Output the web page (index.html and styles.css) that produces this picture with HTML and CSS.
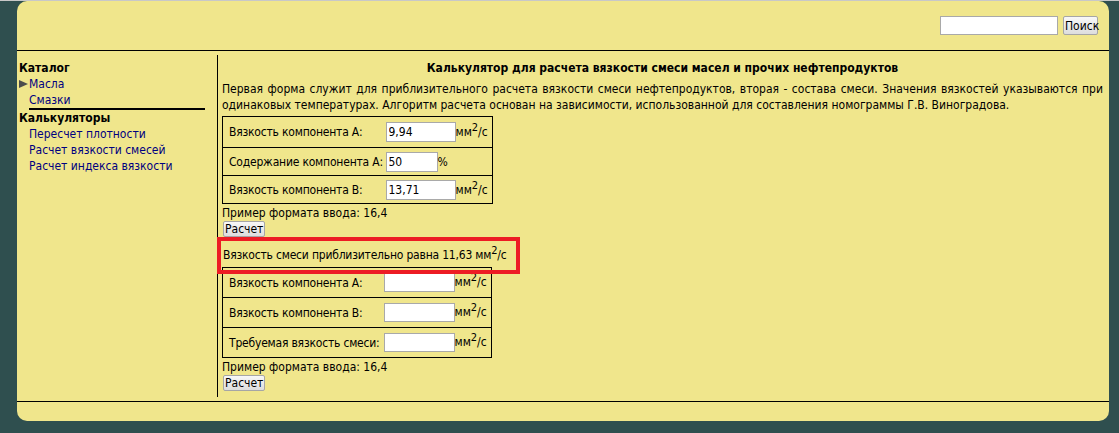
FILE: index.html
```html
<!DOCTYPE html>
<html lang="ru">
  <head>
    <meta charset="UTF-8" />
    <title>Калькулятор вязкости смеси</title>
    <link rel="stylesheet" href="styles.css">
  </head>
  <body>
    <div class="page">
      <header class="header">
        <form class="search">
          <input class="search__input" type="text" />
          <button class="search__button" type="button">Поиск</button>
        </form>
      </header>
      <div class="layout">
        <nav class="sidebar">
          <div class="sidebar__title">Каталог</div>
          <a class="sidebar__link sidebar__link--current" href="#">
            <svg class="sidebar__arrow" width="9" height="8" viewBox="0 0 9 8"><polygon points="0,0 9,4 0,8" fill="#4d4d4d" /></svg>Масла
          </a>
          <a class="sidebar__link sidebar__link--last" href="#">Смазки</a>
          <div class="sidebar__title">Калькуляторы</div>
          <a class="sidebar__link" href="#">Пересчет плотности</a>
          <a class="sidebar__link" href="#">Расчет вязкости смесей</a>
          <a class="sidebar__link" href="#">Расчет индекса вязкости</a>
        </nav>
        <main class="main">
          <h1 class="main__title">Калькулятор для расчета вязкости смеси масел и прочих нефтепродуктов</h1>
          <p class="main__text">Первая форма служит для приблизительного расчета вязкости смеси нефтепродуктов, вторая - состава смеси. Значения вязкостей указываются при одинаковых температурах. Алгоритм расчета основан на зависимости, использованной для составления номограммы Г.В. Виноградова.</p>

          <table class="calc calc--first">
            <tr class="calc__row calc__row--tall">
              <td class="calc__label">Вязкость компонента А:</td>
              <td class="calc__field"><input class="calc__input" type="text" value="9,94" />мм<sup>2</sup>/с</td>
            </tr>
            <tr class="calc__row">
              <td class="calc__label">Содержание компонента А:</td>
              <td class="calc__field"><input class="calc__input calc__input--short" type="text" value="50" />%</td>
            </tr>
            <tr class="calc__row">
              <td class="calc__label">Вязкость компонента В:</td>
              <td class="calc__field"><input class="calc__input" type="text" value="13,71" />мм<sup>2</sup>/с</td>
            </tr>
          </table>
          <div class="calc__hint">Пример формата ввода: 16,4</div>
          <button class="calc__button" type="button">Расчет</button>

          <div class="result">Вязкость смеси приблизительно равна 11,63 мм<sup>2</sup>/с</div>

          <table class="calc calc--second">
            <tr class="calc__row">
              <td class="calc__label">Вязкость компонента А:</td>
              <td class="calc__field"><input class="calc__input" type="text" />мм<sup>2</sup>/с</td>
            </tr>
            <tr class="calc__row">
              <td class="calc__label">Вязкость компонента В:</td>
              <td class="calc__field"><input class="calc__input" type="text" />мм<sup>2</sup>/с</td>
            </tr>
            <tr class="calc__row">
              <td class="calc__label">Требуемая вязкость смеси:</td>
              <td class="calc__field"><input class="calc__input" type="text" />мм<sup>2</sup>/с</td>
            </tr>
          </table>
          <div class="calc__hint">Пример формата ввода: 16,4</div>
          <button class="calc__button" type="button">Расчет</button>
        </main>
      </div>
      <footer class="footer"></footer>
    </div>
  </body>
</html>
```

FILE: styles.css
```css
:root {
  --color-bg: #2f4f4f;
  --color-panel: #f0e68c;
  --color-fg: #000;
  --color-link: #000080;
  --color-mark: #ed1c24;
}

*,
*::before,
*::after {
  box-sizing: border-box;
}

html,
body {
  height: 100%;
}

body {
  margin: 0;
  border-top: 1px solid #c8c8c8;
  background-color: var(--color-bg);
  color: var(--color-fg);
  font-family: "DejaVu Sans Condensed", "DejaVu Sans", sans-serif;
  font-stretch: condensed;
  font-size: 12px;
  line-height: 16px;
}

.page {
  width: 1092px;
  margin-left: 17px;
  border-radius: 10px;
  background-color: var(--color-panel);
}

/* header with search */

.header {
  height: 50px;
  padding: 15px 11px 0 0;
  border-bottom: 1px solid #000;
  display: flex;
  justify-content: flex-end;
  align-items: flex-start;
}

.search {
  display: flex;
  gap: 5px;
  margin: 0;
}

.search__input {
  width: 118px;
  height: 19px;
  margin: 0;
  border: 1px solid #a9a9a9;
  background: #fff;
}

.search__button,
.calc__button {
  margin: 0;
  padding: 0 1px;
  border: 1px solid #a6a6a6;
  border-radius: 2px;
  background: linear-gradient(#f8f8f8, #dddddd);
  font-family: inherit;
  font-stretch: condensed;
  font-size: 12px;
  line-height: 14px;
  color: #000;
}

.search__button {
  height: 19px;
  width: 35px;
}

/* sidebar + main */

.layout {
  display: flex;
  padding: 4px 0;
}

.sidebar {
  width: 201px;
  flex-shrink: 0;
  padding: 5px 0 0 2px;
  border-right: 1px solid #000;
  display: flex;
  flex-direction: column;
  align-items: flex-start;
}

.sidebar__title {
  font-weight: 700;
}

.sidebar__link {
  margin-left: 10px;
  color: var(--color-link);
  text-decoration: none;
}

.sidebar__link--current {
  margin-left: 0;
}

.sidebar__arrow {
  margin-right: 1px;
}

.sidebar__link--last {
  align-self: stretch;
  margin-right: 12px;
  border-bottom: 2px solid #000;
}

.main {
  flex: 1 1 auto;
  padding: 5px 6px 6px 4px;
}

.main__title {
  margin: 0;
  font-size: 12px;
  line-height: 16px;
  text-align: center;
}

.main__text {
  margin: 5px 0 3px;
  text-align: justify;
}

/* calculator tables */

.calc {
  table-layout: fixed;
  border-collapse: collapse;
  border: 1px solid #000;
}

.calc--first {
  width: 271px;
}

.calc--second {
  width: 270px;
}

.calc__row {
  height: 28px;
}

.calc--first .calc__row--tall {
  height: 31px;
}

.calc--second .calc__row {
  height: 30px;
}

.calc__row + .calc__row {
  border-top: 1px solid #000;
}

.calc__label {
  width: 163px;
  padding: 0 2px 0 6px;
  letter-spacing: -0.2px;
  white-space: nowrap;
}

.calc--second .calc__label {
  width: 161px;
}

.calc__field {
  padding: 0;
  white-space: nowrap;
}

.calc__input {
  width: 70px;
  height: 20px;
  margin: 0;
  padding: 0 2px;
  border: 1px solid #a9a9a9;
  background: #fff;
  font-family: inherit;
  font-stretch: condensed;
  font-size: 12px;
  vertical-align: middle;
}

.calc--second .calc__input {
  width: 71px;
  height: 19px;
}

.calc__input--short {
  width: 52px;
}

sup {
  font-size: 11px;
  line-height: 0;
  vertical-align: 5px;
}

.calc__hint {
  margin-top: 1px;
}

.calc__button {
  display: block;
  height: 16px;
  margin-left: 1px;
}

.result {
  position: relative;
  padding: 10px 0 4px 1px;
  letter-spacing: -0.2px;
}

/* red annotation frame round the result */
.result::after {
  content: "";
  position: absolute;
  left: -5px;
  top: 0;
  width: 303px;
  height: 37px;
  border: 4px solid var(--color-mark);
}

.footer {
  height: 20px;
  border-top: 1px solid #000;
}
```
